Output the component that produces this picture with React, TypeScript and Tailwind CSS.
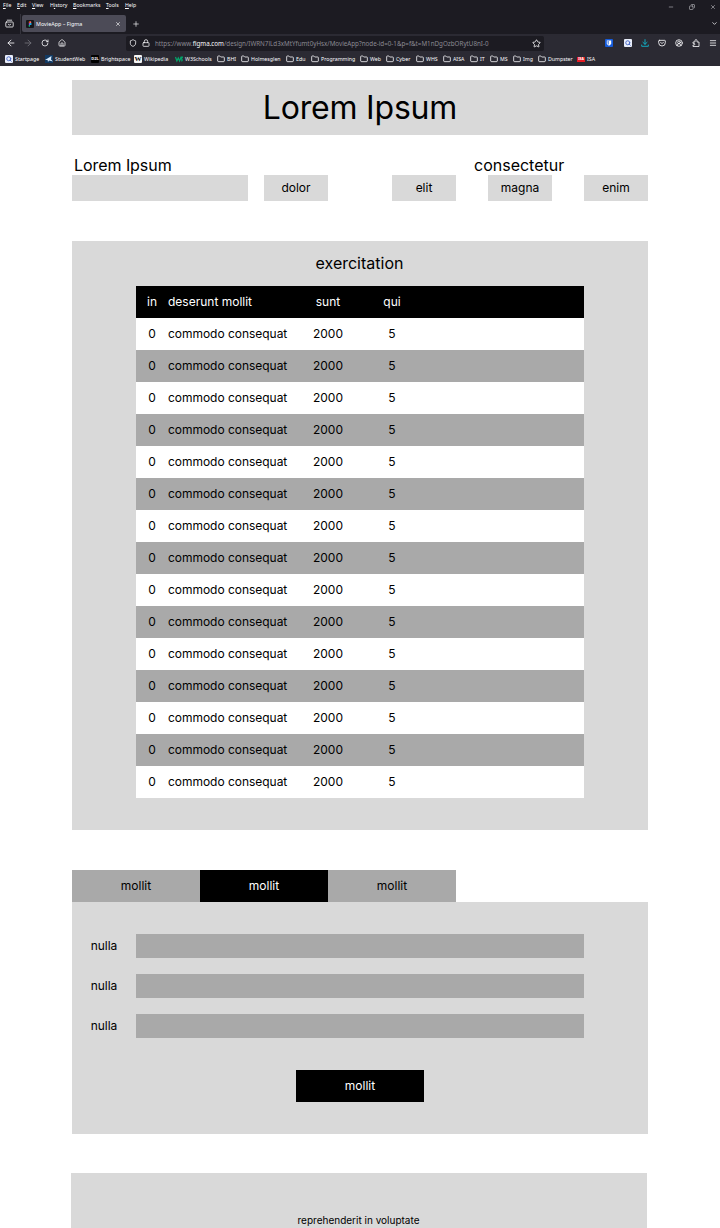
import type { ReactNode } from "react";
import { ArrowLeft, ArrowRight, ChevronDown, CircleUserRound, Copy, Folder, House, Lock, Menu, Minus, Plus, RotateCw, Search, Shield, Star, X } from "lucide-react";

function PocketIcon() {
  return (
    <svg viewBox="0 0 24 24" className="size-2" fill="none" stroke="currentColor" strokeWidth="2.5" strokeLinecap="round" strokeLinejoin="round">
      <path d="M4 4h16a2 2 0 0 1 2 2v5a10 10 0 0 1-20 0V6a2 2 0 0 1 2-2Z" />
      <path d="m7.5 9.5 4.5 4.5 4.5-4.5" />
    </svg>
  );
}

function ExtensionIcon() {
  return (
    <svg viewBox="0 0 8 8" className="size-[8px]" fill="none" stroke="currentColor" strokeWidth=".8" strokeLinejoin="round">
      <path d="M1 3h2V1.6a1 1 0 0 1 2 0V3h2v4.5H1V6h1a.8.8 0 0 0 0-1.6H1Z" />
    </svg>
  );
}

function DownloadIcon() {
  return (
    <svg viewBox="0 0 8 8" className="size-[8px]" fill="none" stroke="#10b5cd" strokeWidth=".9" strokeLinecap="round" strokeLinejoin="round">
      <path d="M4 .6v4.6M1.9 3.3 4 5.3l2.1-2M.7 6v1.3h6.6V6" />
    </svg>
  );
}

function FirefoxViewIcon() {
  return (
    <svg viewBox="0 0 9 9" className="size-[9px]" fill="none" stroke="currentColor" strokeWidth=".8" strokeLinecap="round" strokeLinejoin="round">
      <path d="M2.3 1.2h4.4M1.4 3h6.2a.6.6 0 0 1 .6.6v3.6a.8.8 0 0 1-.8.8H1.6a.8.8 0 0 1-.8-.8V3.6a.6.6 0 0 1 .6-.6ZM3.2 5.2c0 1.2 2.6 1.2 2.6 0" />
    </svg>
  );
}

function FigmaMark() {
  return (
    <svg viewBox="0 0 8 8" className="size-[8px] shrink-0">
      <rect width="8" height="8" rx="1" fill="#17171a" />
      <path d="M3.9 1.3h-.3a.9.9 0 0 0 0 1.8h.3Z" fill="#f24e1e" />
      <path d="M3.9 1.3h.5a.9.9 0 0 1 0 1.8h-.5Z" fill="#ff7262" />
      <path d="M3.9 3.1h-.3a.9.9 0 0 0 0 1.8h.3Z" fill="#a259ff" />
      <circle cx="4.7" cy="4" r=".9" fill="#1abcfe" />
      <path d="M3.9 4.9h-.3a.9.9 0 1 0 .3 1.7Z" fill="#0acf83" />
    </svg>
  );
}

function Tile({ className, children }: { className: string; children: ReactNode }) {
  return <span className={"flex h-[8px] w-[8px] items-center justify-center rounded-[1px] " + className}>{children}</span>;
}

const folder = <Folder className="size-[8px]" strokeWidth={2.4} />;
const searchTile = <Tile className="bg-[#e8edfa] text-[#3e5fc0]"><Search className="size-[6px]" strokeWidth={3.5} /></Tile>;

const bookmarks: { label: string; width: string; icon: ReactNode }[] = [
  { label: "Startpage", width: "w-[40px]", icon: searchTile },
  {
    label: "StudentWeb", width: "w-[46px]",
    icon: (
      <svg viewBox="0 0 8 8" className="size-[8px]"><rect width="8" height="8" fill="#123a63" /><path d="M0 5 6.5 1 6 4.5 8 6.5 4 5.5 3 7 2.6 5Z" fill="#d8ecff" /></svg>
    ),
  },
  { label: "Brightspace", width: "w-[43px]", icon: <Tile className="bg-black text-[4px] font-bold text-white">D2L</Tile> },
  { label: "Wikipedia", width: "w-[41px]", icon: <Tile className="bg-[#f4f4f4] font-['Liberation_Serif',serif] text-[7px] font-bold text-black">W</Tile> },
  {
    label: "W3Schools", width: "w-[42px]",
    icon: <svg viewBox="0 0 8 8" className="size-[8px]" fill="none" stroke="#04a56b" strokeWidth="1.2"><path d="m.5 2 1.4 4L3.3 3l1.3 3L6 2.2h1.4L6.2 4c1.4 0 1.5 2-.1 2" /></svg>,
  },
  { label: "BHI", width: "w-[24px]", icon: folder },
  { label: "Holmesglen", width: "w-[45px]", icon: folder },
  { label: "Edu", width: "w-[25px]", icon: folder },
  { label: "Programming", width: "w-[49px]", icon: folder },
  { label: "Web", width: "w-[26px]", icon: folder },
  { label: "Cyber", width: "w-[30px]", icon: folder },
  { label: "WHS", width: "w-[27px]", icon: folder },
  { label: "AISA", width: "w-[27px]", icon: folder },
  { label: "IT", width: "w-[20px]", icon: folder },
  { label: "MS", width: "w-[23px]", icon: folder },
  { label: "Img", width: "w-[25px]", icon: folder },
  { label: "Dumpster", width: "w-[39px]", icon: folder },
  { label: "ISA", width: "w-[30px]", icon: <span className="flex h-[5px] w-[8px] items-center justify-center bg-[#e51b23] text-[3.5px] font-bold text-white">ISA</span> },
];

const menus = [
  { label: "File", width: "w-[14px]" },
  { label: "Edit", width: "w-[15px]" },
  { label: "View", width: "w-[18px]" },
  { label: "History", width: "w-[23px]", at: 1 },
  { label: "Bookmarks", width: "w-[33px]" },
  { label: "Tools", width: "w-[19px]" },
  { label: "Help", width: "w-[16px]" },
];

function Browser() {
  return (
    <header className="flex h-[66px] flex-col bg-[#1c1b22] font-['Noto_Sans',sans-serif] text-[5.5px] leading-[8px] text-[#fbfbfe]">
      <div className="flex h-[13px] items-center pr-1 pl-[3px]">
        {menus.map((m) => (
          <span key={m.label} className={"-mt-[3px] whitespace-nowrap text-[5.2px] " + m.width}>
            {m.label.slice(0, m.at ?? 0)}
            <u>{m.label.charAt(m.at ?? 0)}</u>
            {m.label.slice((m.at ?? 0) + 1)}
          </span>
        ))}
        <div className="ml-auto flex items-center gap-[15px] text-[#b8b8bd]">
          <Minus className="size-[6px]" strokeWidth={2.5} />
          <Copy className="size-[6px] -scale-x-100" strokeWidth={2.5} />
          <X className="size-[6px]" strokeWidth={2.5} />
        </div>
      </div>
      <div className="flex h-[21px] items-center pr-[2px] pl-[5px]">
        <FirefoxViewIcon />
        <div className="ml-[6px] h-[20px] w-px bg-[#34333c]" />
        <div className="ml-px flex h-[17px] w-[104px] items-center rounded-[2px] bg-[#4c4b57] pr-[5px] pl-[4px]">
          <FigmaMark />
          <span className="ml-[2px] text-[5.4px]">MovieApp – Figma</span>
          <X className="ml-auto size-[6px]" strokeWidth={2.5} />
        </div>
        <Plus className="ml-[6px] size-[8px]" strokeWidth={2} />
        <ChevronDown className="ml-auto size-[7px]" strokeWidth={2.5} />
      </div>
      <div className="flex h-[18px] items-center bg-[#2b2a33] pr-[3px] pl-[6px]">
        <ArrowLeft className="size-[10px]" strokeWidth={2} />
        <ArrowRight className="ml-[7px] size-[10px] text-[#74737c]" strokeWidth={2} />
        <RotateCw className="ml-[8px] size-[8px]" strokeWidth={2.3} />
        <House className="ml-[9px] size-[8px]" strokeWidth={2.3} />
        <div className="ml-[60px] flex h-[15px] w-[418px] items-center rounded-[2px] bg-[#1c1b22] pr-[3px] pl-[3px]">
          <Shield className="size-[8px]" strokeWidth={2.3} />
          <Lock className="ml-[5px] size-[8px]" strokeWidth={2.3} />
          <span className="ml-[5px] w-[336px] pt-px text-[6.25px] whitespace-nowrap text-[#8b8a92]">
            https://www.<span className="text-[#fbfbfe]">figma.com</span>/design/IWRN7lLd3xMtYfumt0yHsx/MovieApp?node-id=0-1&amp;p=f&amp;t=M1nDgOzbORytU8nI-0
          </span>
          <Star className="ml-auto size-[9px]" strokeWidth={2.2} />
        </div>
        <div className="ml-auto flex items-center gap-[9px]">
          <Tile className="mr-[2px] bg-[#175ddc] text-white">
            <svg viewBox="0 0 6 6" className="size-[6px]"><path d="M.8.4h4.4v2.8C5.2 4.6 3 5.7 3 5.7S.8 4.6.8 3.2Z" fill="#fff" /><path d="M1.4 1H3v3.9S1.4 4.1 1.4 3.1Z" fill="#175ddc" opacity=".6" /></svg>
          </Tile>
          {searchTile}
          <DownloadIcon />
          <PocketIcon />
          <CircleUserRound className="size-[8px]" strokeWidth={2.4} />
          <ExtensionIcon />
          <Menu className="size-[8px]" strokeWidth={2.4} />
        </div>
      </div>
      <nav className="flex h-[14px] items-center bg-[#2b2a33] pl-[5px]">
        {bookmarks.map((b) => (
          <div key={b.label} className={"flex shrink-0 items-center gap-[2px] whitespace-nowrap text-[5.25px] " + b.width}>
            {b.icon}
            <span>{b.label}</span>
          </div>
        ))}
      </nav>
    </header>
  );
}

function Control({ className, children }: { className: string; children?: ReactNode }) {
  return <div className={"flex h-[26px] items-center justify-center bg-[#d9d9d9] " + className}>{children}</div>;
}

export default function App() {
  return (
    <div className="h-[1228px] w-[720px] overflow-hidden bg-white font-['Inter',sans-serif] text-[12px] leading-4 text-black">
      <Browser />
      <main className="pt-[14px] pl-[72px]">
        <h1 className="flex h-[55px] w-[576px] items-center justify-center bg-[#d9d9d9] text-[32px] leading-10 tracking-[-0.2px]">Lorem Ipsum</h1>

        <div className="mt-5 flex h-5 w-[576px] items-center text-[16px]">
          <span className="ml-[2px] w-[400px] tracking-[-0.06px]">Lorem Ipsum</span>
          <span>consectetur</span>
        </div>
        <div className="flex w-[576px]">
          <Control className="w-[176px]" />
          <Control className="ml-4 w-16">dolor</Control>
          <Control className="ml-16 w-16">elit</Control>
          <Control className="ml-8 w-16">magna</Control>
          <Control className="ml-8 w-16">enim</Control>
        </div>

        <section className="mt-10 h-[589px] w-[576px] bg-[#d9d9d9]">
          <h2 className="flex h-[45px] items-center justify-center pr-px pb-[2px] text-[16px]">exercitation</h2>
          <div className="mx-auto w-[448px]">
            <div className="grid h-8 grid-cols-[32px_128px_64px_64px] items-center bg-black text-white">
              <span className="text-center">in</span>
              <span>deserunt mollit</span>
              <span className="text-center">sunt</span>
              <span className="text-center">qui</span>
            </div>
            {Array.from({ length: 15 }, (_, i) => (
              <div key={i} className="grid h-8 grid-cols-[32px_128px_64px_64px] items-center even:bg-white odd:bg-[#a9a9a9]">
                <span className="text-center">0</span>
                <span className="tracking-[-0.03px]">commodo consequat</span>
                <span className="text-center">2000</span>
                <span className="text-center">5</span>
              </div>
            ))}
          </div>
        </section>

        <div className="mt-10 flex">
          <div className="flex h-8 w-32 items-center justify-center bg-[#a9a9a9]">mollit</div>
          <div className="flex h-8 w-32 items-center justify-center bg-black text-white">mollit</div>
          <div className="flex h-8 w-32 items-center justify-center bg-[#a9a9a9]">mollit</div>
        </div>
        <section className="h-[232px] w-[576px] bg-[#d9d9d9] pt-8">
          <div className="flex flex-col gap-4">
            {[0, 1, 2].map((i) => (
              <div key={i} className="flex h-6 items-center">
                <span className="w-16 text-center">nulla</span>
                <div className="h-6 w-[448px] bg-[#a9a9a9]" />
              </div>
            ))}
          </div>
          <div className="mx-auto mt-8 flex h-8 w-32 items-center justify-center bg-black text-white">mollit</div>
        </section>
        <footer className="mt-[39px] -ml-px flex h-[55px] w-[576px] justify-center bg-[#d9d9d9] pt-[39px] pr-px text-[10px]">reprehenderit in voluptate</footer>
      </main>
    </div>
  );
}
